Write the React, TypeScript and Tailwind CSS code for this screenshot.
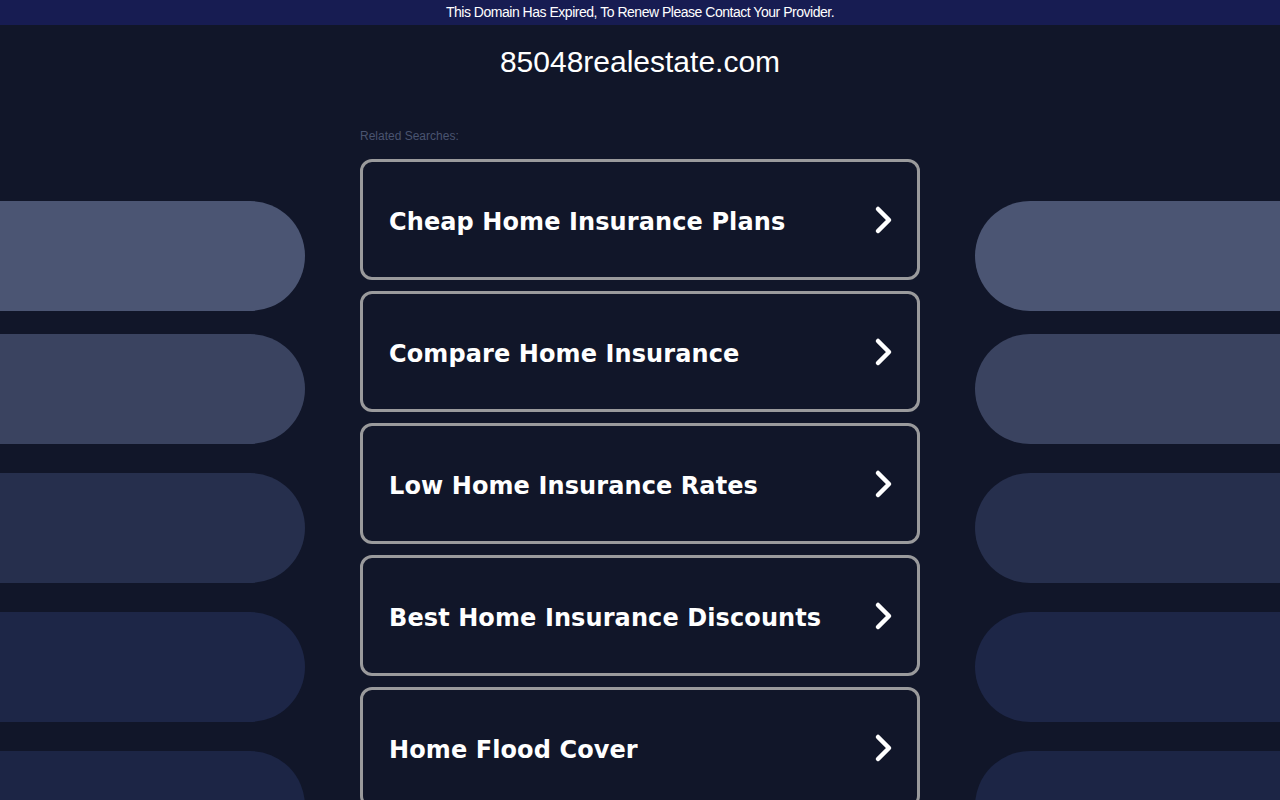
import React from 'react';

const searches = [
  'Cheap Home Insurance Plans',
  'Compare Home Insurance',
  'Low Home Insurance Rates',
  'Best Home Insurance Discounts',
  'Home Flood Cover',
];

// decorative background pills, top to bottom
const pills = [
  { color: 'bg-[#4b5573]', gap: 'mt-0' },
  { color: 'bg-[#3a4360]', gap: 'mt-[23px]' },
  { color: 'bg-[#262f4d]', gap: 'mt-[29px]' },
  { color: 'bg-[#1d2647]', gap: 'mt-[29px]' },
  { color: 'bg-[#1c2545]', gap: 'mt-[29px]' },
];

function Chevron() {
  return (
    <svg width="22" height="30" viewBox="0 0 22 30" fill="none" className="shrink-0">
      <polyline
        points="6,4 17,15 6,26"
        stroke="white"
        strokeWidth="4.5"
        strokeLinecap="round"
        strokeLinejoin="round"
      />
    </svg>
  );
}

function PillColumn({ side }: { side: 'left' | 'right' }) {
  return (
    <div className="pt-[76px] flex flex-col">
      {pills.map((p, i) => (
        <div
          key={i}
          className={`${p.color} ${p.gap} h-[110px] shrink-0 ${side === 'left' ? 'rounded-r-[55px]' : 'rounded-l-[55px]'}`}
        />
      ))}
    </div>
  );
}

export default function App() {
  return (
    <div className="h-[800px] overflow-hidden bg-[#111629] text-white" style={{ fontFamily: '"Liberation Sans", Arial, sans-serif' }}>
      <div className="h-[25px] bg-[#171c52] flex items-center justify-center text-[14px] tracking-[-0.48px]">
        This Domain Has Expired, To Renew Please Contact Your Provider.
      </div>

      <div className="h-[100px] pt-[19px] text-center">
        <h1 className="text-[30px] leading-[36px]">85048realestate.com</h1>
      </div>

      <div className="grid grid-cols-[305px_55px_560px_55px_305px]">
        <PillColumn side="left" />
        <div />
        <div>
          <div className="pt-px text-[12px] leading-[20px] text-[#4a5470]">Related Searches:</div>
          <div className="mt-[13px] flex flex-col gap-[11px]">
            {searches.map((s) => (
              <a
                key={s}
                href="#"
                className="h-[121px] shrink-0 rounded-[12px] border-[3px] border-[#9a9a9c] flex items-center justify-between pl-[26px] pr-[23px]"
              >
                <span
                  className="pt-[4px] text-[24px] font-bold leading-none tracking-[0.1px]"
                  style={{ fontFamily: '"DejaVu Sans", Verdana, sans-serif' }}
                >
                  {s}
                </span>
                <Chevron />
              </a>
            ))}
          </div>
        </div>
        <div />
        <PillColumn side="right" />
      </div>
    </div>
  );
}
